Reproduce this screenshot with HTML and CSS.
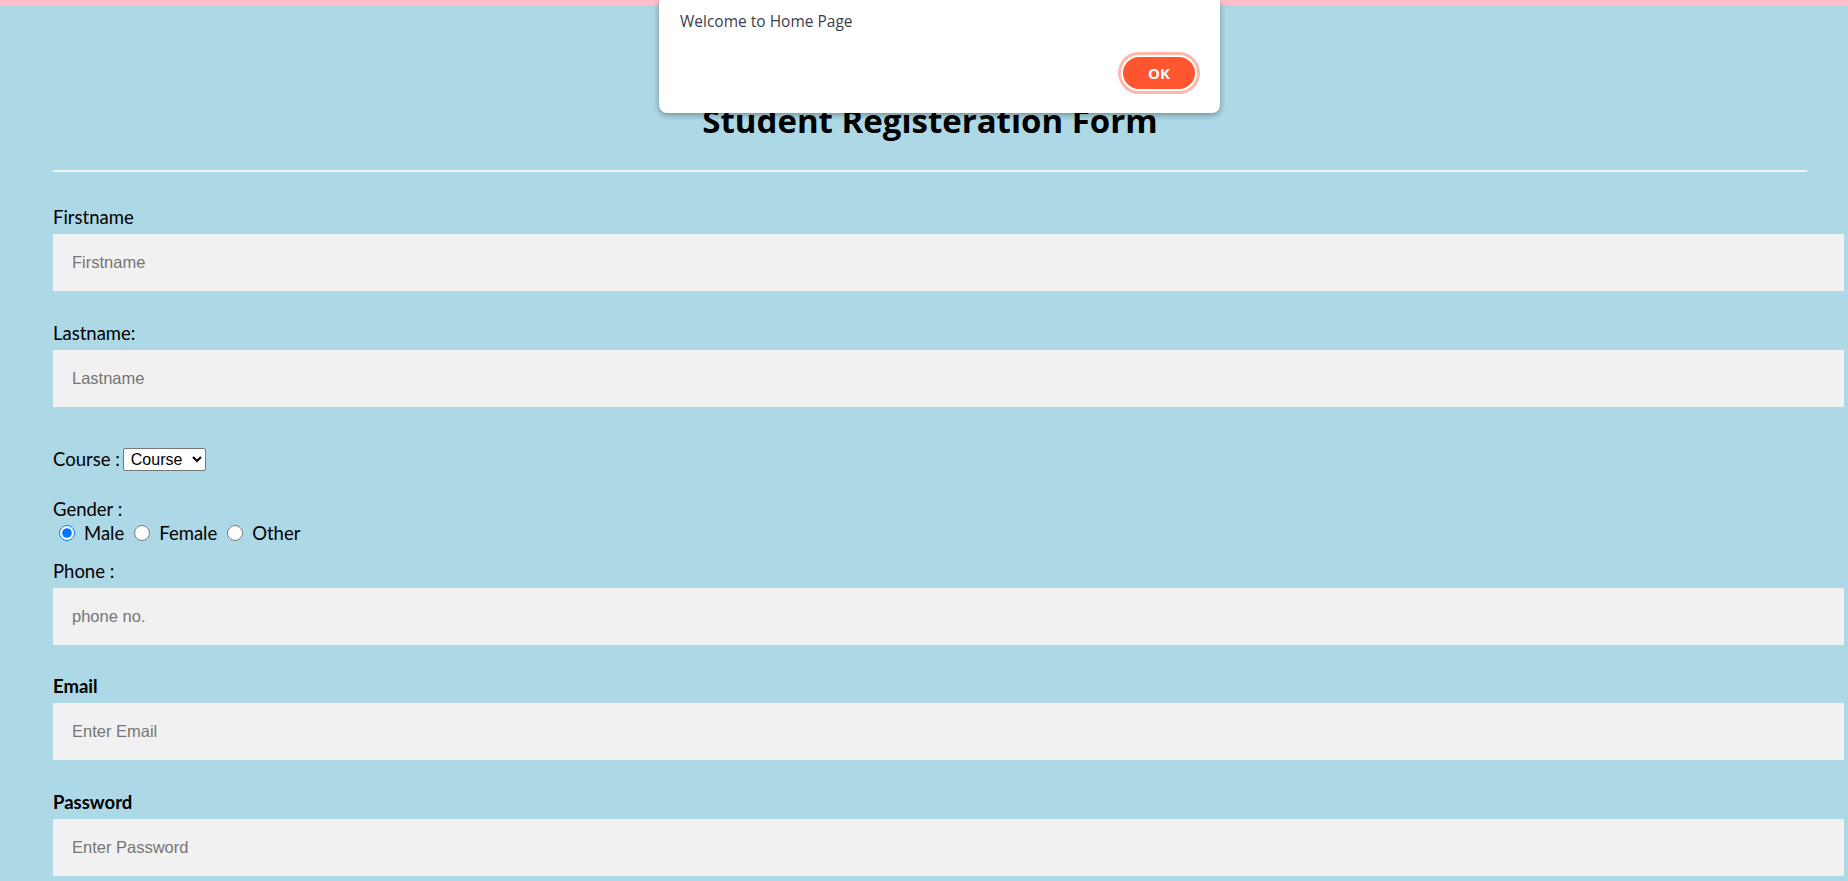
FILE: index.html
```html
<!DOCTYPE html>
<html lang="en">
<head>
<meta charset="utf-8">
<title>Student Registeration Form</title>
<link rel="stylesheet" href="styles.css">
</head>
<body>
<div class="page">
  <form class="container">
    <h1 class="title">Student Registeration Form</h1>
    <hr class="rule">

    <label class="label label-first" for="fn">Firstname</label>
    <input class="field" id="fn" type="text" placeholder="Firstname">

    <label class="label" for="ln">Lastname:</label>
    <input class="field" id="ln" type="text" placeholder="Lastname">

    <div class="course-row">
      <span class="inline-label">Course :</span>
      <select class="course-select">
        <option>Course</option>
        <option>BCA</option>
        <option>BBA</option>
        <option>B.Tech</option>
      </select>
    </div>

    <div class="gender-label">Gender :</div>
    <div class="radio-row">
      <input class="radio" type="radio" name="g" id="m" checked><label class="radio-text" for="m">Male</label>
      <input class="radio" type="radio" name="g" id="f"><label class="radio-text" for="f">Female</label>
      <input class="radio" type="radio" name="g" id="o"><label class="radio-text" for="o">Other</label>
    </div>

    <label class="label label-phone" for="ph">Phone :</label>
    <input class="field" id="ph" type="text" placeholder="phone no.">

    <label class="label bold label-email" for="em">Email</label>
    <input class="field" id="em" type="text" placeholder="Enter Email">

    <label class="label bold" for="pw">Password</label>
    <input class="field" id="pw" type="password" placeholder="Enter Password">
  </form>
</div>

<div class="dialog">
  <p class="dialog-text">Welcome to Home Page</p>
  <div class="dialog-actions">
    <button class="ok-btn" type="button">OK</button>
  </div>
</div>
</body>
</html>
```

FILE: styles.css
```css
html, body {
  margin: 0;
  padding: 0;
}

body {
  background: #add8e6;
  border-top: 5px solid #ffc0cb;
  overflow: hidden;
  height: 876px;
  font-family: Lato, "Liberation Sans", sans-serif;
  color: #000;
}

.container {
  padding: 0 41px 0 53px;
  display: flex;
  flex-direction: column;
  align-items: flex-start;
}

.title {
  align-self: stretch;
  text-align: center;
  font-family: "Open Sans", "Liberation Sans", sans-serif;
  font-weight: 700;
  font-size: 33px;
  line-height: 40px;
  margin: 96px 0 0 0;
}

.rule {
  align-self: stretch;
  border: 0;
  border-top: 2px solid #f1f1f1;
  height: 0;
  margin: 29px 0 0 0;
}

.label {
  font-size: 18.5px;
  line-height: 24px;
  margin-top: 30px;
}

.label-first {
  margin-top: 33px;
}

.bold {
  font-weight: 700;
}

.field {
  box-sizing: border-box;
  width: calc(100% + 37px);
  height: 57px;
  padding: 0 19px;
  margin: 5px 0 0 0;
  border: none;
  background: #f1f1f1;
  font-family: "Liberation Sans", Arial, sans-serif;
  font-size: 16.5px;
  color: #000;
  outline: none;
}

.field::placeholder {
  color: #757575;
}

.course-row {
  display: flex;
  align-items: center;
  gap: 3px;
  margin-top: 40px;
  height: 24px;
}

.inline-label {
  font-size: 18.5px;
  line-height: 24px;
}

.course-select {
  box-sizing: border-box;
  width: 83px;
  height: 23px;
  font-family: "Liberation Sans", Arial, sans-serif;
  font-size: 16px;
  border: 1px solid #767676;
  border-radius: 2px;
  background: #fff;
  color: #000;
  padding: 0 0 0 3px;
}

.gender-label {
  font-size: 18.5px;
  line-height: 24px;
  margin-top: 26px;
}

.radio-row {
  display: flex;
  align-items: center;
  height: 24px;
  font-size: 18.5px;
  line-height: 24px;
}

.radio {
  width: 16px;
  height: 16px;
  margin: 0 4px 0 6px;
  accent-color: #0075ff;
}

.radio-text {
  margin-left: 5px;
  margin-right: 4px;
}

.label-phone {
  margin-top: 14px;
}

.label-email {
  margin-top: 29px;
}

.dialog {
  position: absolute;
  left: 659px;
  top: 0;
  width: 561px;
  height: 113px;
  box-sizing: border-box;
  background: #fff;
  border-radius: 0 0 8px 8px;
  box-shadow: 0 2px 6px rgba(0, 0, 0, 0.35);
  padding: 11px 20px 0 21px;
  font-family: "Open Sans", "Noto Sans", sans-serif;
}

.dialog-text {
  margin: 0;
  font-size: 15.5px;
  line-height: 21px;
  color: #3d3d4e;
}

.dialog-actions {
  display: flex;
  justify-content: flex-end;
  margin-top: 23px;
}

.ok-btn {
  width: 76px;
  height: 36px;
  box-sizing: border-box;
  border: 2px solid #fff;
  border-radius: 18px;
  background: #ff5630;
  box-shadow: 0 0 0 3px #ffb8a8;
  color: #fff;
  font-family: "Open Sans", "Noto Sans", sans-serif;
  font-weight: 700;
  font-size: 15px;
  padding: 0;
  margin-right: 3px;
}
```
